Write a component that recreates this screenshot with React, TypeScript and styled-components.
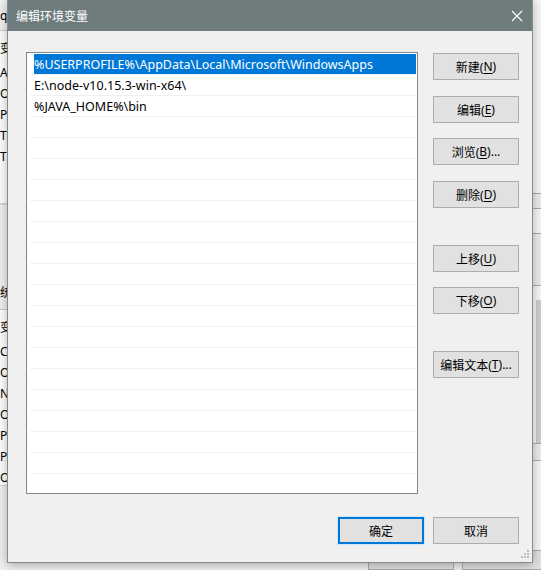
import React from 'react'
import styled, { createGlobalStyle } from 'styled-components'

const GlobalStyle = createGlobalStyle`
  html, body {
    margin: 0;
    padding: 0;
  }
  body {
    background: #f0f0f0;
    font-family: "Noto Sans", "Noto Sans CJK SC", sans-serif;
  }
`

const UI_FONT = `"Noto Sans", "Noto Sans CJK SC", sans-serif`

const Desktop = styled.div`
  position: relative;
  width: 541px;
  height: 570px;
  overflow: hidden;
  background: #f0f0f0;
`

/* ---- window behind the dialog ---- */

const BackWindow = styled.div`
  display: flex;
  flex-direction: column;
  height: 100%;
  font: 12px ${UI_FONT};
  color: #000;
`

const BackMain = styled.div`
  display: flex;
  height: 563px;
`

const LeftStrip = styled.div`
  width: 7px;
  overflow: hidden;
  display: flex;
  flex-direction: column;
`

const StripHead = styled.div`
  height: 30px;
  border-bottom: 1px solid #c9c9c9;
  line-height: 32px;
  white-space: nowrap;
`

const StripList = styled.div<{ $h: number }>`
  height: ${(p) => p.$h}px;
  box-sizing: border-box;
  background: #fff;
  padding-top: 7px;
  border-bottom: 1px solid #d4d4d4;
`

const StripBand = styled.div<{ $h: number }>`
  height: ${(p) => p.$h}px;
  box-sizing: border-box;
  border-top: 1px solid #dcdcdc;
  border-bottom: 1px solid #c9c9c9;
  display: flex;
  align-items: flex-end;
  padding-bottom: 8px;
  white-space: nowrap;
`

const StripRow = styled.div<{ $header?: boolean }>`
  height: 21px;
  line-height: 21px;
  margin-bottom: ${(p) => (p.$header ? 3 : 0)}px;
  white-space: nowrap;
`

const Spacer = styled.div`
  flex: 1;
`

const RightStrip = styled.div`
  width: 9px;
  display: flex;
  flex-direction: column;
  background: #f7f7f7;
`

const RightSeg = styled.div<{ $h: number; $bg?: string }>`
  height: ${(p) => p.$h}px;
  background: ${(p) => p.$bg ?? 'transparent'};
  border-bottom: 1px solid #a9a9a9;
  display: flex;
  justify-content: flex-end;
`

const Thumb = styled.div`
  width: 5px;
  margin-top: 14px;
  background: #cdcdcd;
`

const BackFooter = styled.div`
  flex: 1;
  display: flex;
  justify-content: flex-end;
  gap: 8px;
  margin-right: -7px;
`

const BackButton = styled.div`
  width: 86px;
  height: 20px;
  box-sizing: border-box;
  border: 1px solid #adadad;
  background: #e1e1e1;
`

/* ---- dialog ---- */

const Dialog = styled.div`
  position: absolute;
  left: 7px;
  top: -1px;
  width: 526px;
  height: 564px;
  box-sizing: border-box;
  border: 1px solid #8a8a8a;
  background: #f0f0f0;
  box-shadow: 0 2px 10px rgba(0, 0, 0, 0.3);
  display: flex;
  flex-direction: column;
`

const TitleBar = styled.div`
  height: 31px;
  flex-shrink: 0;
  background: #6e7c7d;
  display: flex;
  align-items: center;
  justify-content: space-between;
  padding: 0 8px 0 8px;
`

const Title = styled.span`
  font: 12px ${UI_FONT};
  color: #fff;
`

const CloseButton = styled.div`
  display: flex;
  align-items: center;
  justify-content: center;
  width: 14px;
  height: 14px;
`

const Body = styled.div`
  flex: 1;
  display: flex;
  flex-direction: column;
  padding: 21px 13px 0 18px;
`

const Main = styled.div`
  display: flex;
  gap: 15px;
`

const ListBox = styled.div`
  width: 392px;
  height: 442px;
  box-sizing: border-box;
  border: 1px solid #828790;
  background: #fff;
  padding: 1px 1px 0 3px;
  overflow: hidden;
`

const ListRow = styled.div<{ $selected?: boolean }>`
  height: 21px;
  box-sizing: border-box;
  border-bottom: 1px solid #f0f0f0;
  display: flex;
  align-items: center;
  padding-left: 4px;
  font: 12.5px ${UI_FONT};
  color: ${(p) => (p.$selected ? '#fff' : '#000')};
  background: ${(p) => (p.$selected ? '#0078d7' : 'transparent')};
  background-clip: content-box;
  white-space: nowrap;
`

const ButtonColumn = styled.div`
  display: flex;
  flex-direction: column;
  padding-top: 1px;
`

const Button = styled.div<{ $default?: boolean; $space?: number }>`
  width: 86px;
  height: 27px;
  box-sizing: border-box;
  margin-top: ${(p) => p.$space ?? 0}px;
  border: 1px solid ${(p) => (p.$default ? '#0078d7' : '#adadad')};
  box-shadow: ${(p) =>
    p.$default ? 'inset 0 0 0 1px #0078d7, 0 0 0 1px #cfe6fa' : 'none'};
  background: #e1e1e1;
  display: flex;
  align-items: center;
  justify-content: center;
  font: 12px ${UI_FONT};
  color: #000;
  white-space: nowrap;
`

const Key = styled.span`
  text-decoration: underline;
  text-underline-offset: 2px;
`

const Footer = styled.div`
  display: flex;
  justify-content: flex-end;
  gap: 9px;
  margin-top: 23px;
`

const Grip = styled.svg`
  position: absolute;
  right: 2px;
  bottom: 3px;
`

const PATHS = [
  '%USERPROFILE%\\AppData\\Local\\Microsoft\\WindowsApps',
  'E:\\node-v10.15.3-win-x64\\',
  '%JAVA_HOME%\\bin',
]

const ROW_COUNT = 21

type Action = { label: string; key: string; suffix?: string; space: number }

const ACTIONS: Action[] = [
  { label: '新建', key: 'N', space: 0 },
  { label: '编辑', key: 'E', space: 16 },
  { label: '浏览', key: 'B', suffix: '...', space: 15 },
  { label: '删除', key: 'D', space: 16 },
  { label: '上移', key: 'U', space: 37 },
  { label: '下移', key: 'O', space: 15 },
  { label: '编辑文本', key: 'T', suffix: '...', space: 37 },
]

const USER_VARS = ['A', 'O', 'Pa', 'TE', 'TM']
const SYSTEM_VARS = ['Co', 'O', 'N', 'O', 'Pa', 'PA', 'OP']

const RIGHT_SEGS = [
  { h: 193 },
  { h: 14, bg: '#ececec' },
  { h: 24 },
  { h: 51, bg: '#ececec' },
  { h: 157 },
  { h: 16, bg: '#ececec' },
]

const Mnemonic = ({ a }: { a: Action }) => (
  <>
    {a.label}(<Key>{a.key}</Key>){a.suffix}
  </>
)

const App = () => {
  const rows = Array.from({ length: ROW_COUNT }, (_, i) => PATHS[i] ?? '')

  return (
    <Desktop>
      <GlobalStyle />
      <BackWindow>
        <BackMain>
          <LeftStrip>
            <StripHead>q</StripHead>
            <StripList $h={173}>
              <StripRow $header>变</StripRow>
              {USER_VARS.map((v, i) => (
                <StripRow key={i}>{v}</StripRow>
              ))}
            </StripList>
            <StripBand $h={106}>统</StripBand>
            <StripList $h={176}>
              <StripRow $header>变</StripRow>
              {SYSTEM_VARS.map((v, i) => (
                <StripRow key={i}>{v}</StripRow>
              ))}
            </StripList>
          </LeftStrip>
          <Spacer />
          <RightStrip>
            {RIGHT_SEGS.map((s, i) => (
              <RightSeg key={i} $h={s.h} $bg={s.bg}>
                {i === 4 && <Thumb />}
              </RightSeg>
            ))}
          </RightStrip>
        </BackMain>
        <BackFooter>
          <BackButton />
          <BackButton />
        </BackFooter>
      </BackWindow>

      <Dialog>
        <TitleBar>
          <Title>编辑环境变量</Title>
          <CloseButton>
            <svg width="12" height="12" viewBox="0 0 12 12">
              <path
                d="M1 1 L11 11 M11 1 L1 11"
                stroke="#fff"
                strokeWidth="1.1"
                fill="none"
              />
            </svg>
          </CloseButton>
        </TitleBar>
        <Body>
          <Main>
            <ListBox>
              {rows.map((text, i) => (
                <ListRow key={i} $selected={i === 0}>
                  {text}
                </ListRow>
              ))}
            </ListBox>
            <ButtonColumn>
              {ACTIONS.map((a) => (
                <Button key={a.key} $space={a.space}>
                  <Mnemonic a={a} />
                </Button>
              ))}
            </ButtonColumn>
          </Main>
          <Footer>
            <Button $default>确定</Button>
            <Button>取消</Button>
          </Footer>
        </Body>
        <Grip width="9" height="9" viewBox="0 0 9 9">
          {[
            [6, 0],
            [3, 3],
            [6, 3],
            [0, 6],
            [3, 6],
            [6, 6],
          ].map(([x, y], i) => (
            <rect key={i} x={x} y={y} width="2" height="2" fill="#bcbcbc" />
          ))}
        </Grip>
      </Dialog>
    </Desktop>
  )
}

export default App
